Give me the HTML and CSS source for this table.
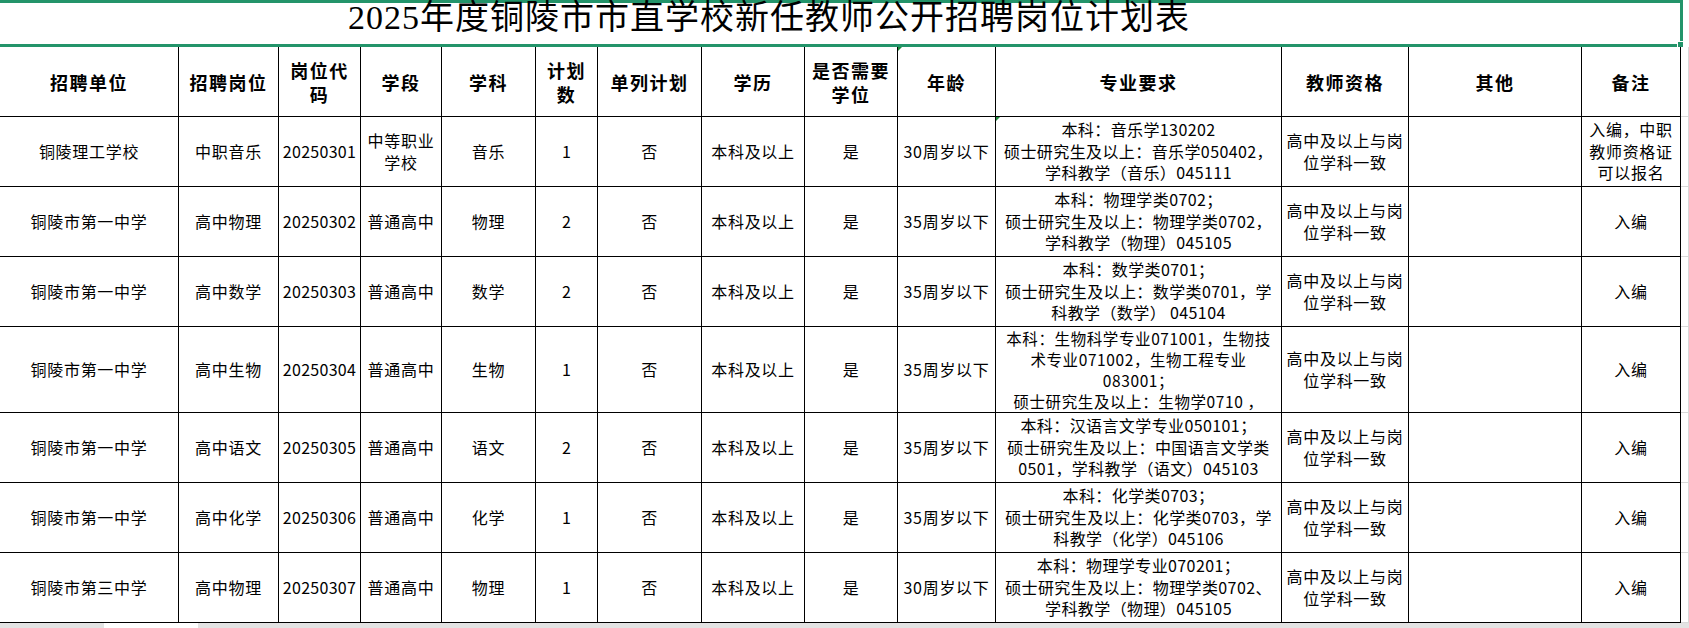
FILE: index.html
```html
<!DOCTYPE html>
<html lang="zh-CN">
<head>
<meta charset="utf-8">
<title>2025年度铜陵市市直学校新任教师公开招聘岗位计划表</title>
<link rel="stylesheet" href="styles.css">
</head>
<body>
<div class="sheet">
  <div class="title-row">
    <div class="title">2025年度铜陵市市直学校新任教师公开招聘岗位计划表<span class="handle"></span></div>
  </div>
  <div class="grid">
    <div class="cell head">招聘单位</div>
    <div class="cell head">招聘岗位</div>
    <div class="cell head">岗位代<br>码</div>
    <div class="cell head">学段</div>
    <div class="cell head">学科</div>
    <div class="cell head">计划<br>数</div>
    <div class="cell head">单列计划</div>
    <div class="cell head">学历</div>
    <div class="cell head">是否需要<br>学位</div>
    <div class="cell head"><span class="flag"></span>年龄</div>
    <div class="cell head">专业要求</div>
    <div class="cell head">教师资格</div>
    <div class="cell head">其他</div>
    <div class="cell head">备注</div>
    <div class="pad"></div>

    <div class="cell">铜陵理工学校</div>
    <div class="cell">中职音乐</div>
    <div class="cell num">20250301</div>
    <div class="cell">中等职业<br>学校</div>
    <div class="cell">音乐</div>
    <div class="cell num">1</div>
    <div class="cell">否</div>
    <div class="cell">本科及以上</div>
    <div class="cell">是</div>
    <div class="cell">30周岁以下</div>
    <div class="cell major"><span class="flag"></span>本科：音乐学130202<br>硕士研究生及以上：音乐学050402，<br>学科教学（音乐）045111</div>
    <div class="cell">高中及以上与岗<br>位学科一致</div>
    <div class="cell"></div>
    <div class="cell">入编，中职<br>教师资格证<br>可以报名</div>
    <div class="pad"></div>

    <div class="cell">铜陵市第一中学</div>
    <div class="cell">高中物理</div>
    <div class="cell num">20250302</div>
    <div class="cell">普通高中</div>
    <div class="cell">物理</div>
    <div class="cell num">2</div>
    <div class="cell">否</div>
    <div class="cell">本科及以上</div>
    <div class="cell">是</div>
    <div class="cell">35周岁以下</div>
    <div class="cell major">本科：物理学类0702；<br>硕士研究生及以上：物理学类0702，<br>学科教学（物理）045105</div>
    <div class="cell">高中及以上与岗<br>位学科一致</div>
    <div class="cell"></div>
    <div class="cell">入编</div>
    <div class="pad"></div>

    <div class="cell">铜陵市第一中学</div>
    <div class="cell">高中数学</div>
    <div class="cell num">20250303</div>
    <div class="cell">普通高中</div>
    <div class="cell">数学</div>
    <div class="cell num">2</div>
    <div class="cell">否</div>
    <div class="cell">本科及以上</div>
    <div class="cell">是</div>
    <div class="cell">35周岁以下</div>
    <div class="cell major">本科：数学类0701；<br>硕士研究生及以上：数学类0701，学<br>科教学（数学） 045104</div>
    <div class="cell">高中及以上与岗<br>位学科一致</div>
    <div class="cell"></div>
    <div class="cell">入编</div>
    <div class="pad"></div>

    <div class="cell">铜陵市第一中学</div>
    <div class="cell">高中生物</div>
    <div class="cell num">20250304</div>
    <div class="cell">普通高中</div>
    <div class="cell">生物</div>
    <div class="cell num">1</div>
    <div class="cell">否</div>
    <div class="cell">本科及以上</div>
    <div class="cell">是</div>
    <div class="cell">35周岁以下</div>
    <div class="cell major tight">本科：生物科学专业071001，生物技<br>术专业071002，生物工程专业<br>083001；<br>硕士研究生及以上：生物学0710 ，</div>
    <div class="cell">高中及以上与岗<br>位学科一致</div>
    <div class="cell"></div>
    <div class="cell">入编</div>
    <div class="pad"></div>

    <div class="cell">铜陵市第一中学</div>
    <div class="cell">高中语文</div>
    <div class="cell num">20250305</div>
    <div class="cell">普通高中</div>
    <div class="cell">语文</div>
    <div class="cell num">2</div>
    <div class="cell">否</div>
    <div class="cell">本科及以上</div>
    <div class="cell">是</div>
    <div class="cell">35周岁以下</div>
    <div class="cell major">本科：汉语言文学专业050101；<br>硕士研究生及以上：中国语言文学类<br>0501，学科教学（语文）045103</div>
    <div class="cell">高中及以上与岗<br>位学科一致</div>
    <div class="cell"></div>
    <div class="cell">入编</div>
    <div class="pad"></div>

    <div class="cell">铜陵市第一中学</div>
    <div class="cell">高中化学</div>
    <div class="cell num">20250306</div>
    <div class="cell">普通高中</div>
    <div class="cell">化学</div>
    <div class="cell num">1</div>
    <div class="cell">否</div>
    <div class="cell">本科及以上</div>
    <div class="cell">是</div>
    <div class="cell">35周岁以下</div>
    <div class="cell major">本科：化学类0703；<br>硕士研究生及以上：化学类0703，学<br>科教学（化学）045106</div>
    <div class="cell">高中及以上与岗<br>位学科一致</div>
    <div class="cell"></div>
    <div class="cell">入编</div>
    <div class="pad"></div>

    <div class="cell">铜陵市第三中学</div>
    <div class="cell">高中物理</div>
    <div class="cell num">20250307</div>
    <div class="cell">普通高中</div>
    <div class="cell">物理</div>
    <div class="cell num">1</div>
    <div class="cell">否</div>
    <div class="cell">本科及以上</div>
    <div class="cell">是</div>
    <div class="cell">30周岁以下</div>
    <div class="cell major">本科：物理学专业070201；<br>硕士研究生及以上：物理学类0702、<br>学科教学（物理）045105</div>
    <div class="cell">高中及以上与岗<br>位学科一致</div>
    <div class="cell"></div>
    <div class="cell">入编</div>
    <div class="pad"></div>
  </div>
  <div class="hscroll">
    <div class="bar bar-a"></div>
    <div class="gap"></div>
    <div class="bar bar-b"></div>
  </div>
</div>
</body>
</html>
```
FILE: styles.css
```css
html, body {
  margin: 0;
  padding: 0;
  background: #ffffff;
  overflow: hidden;
}

.sheet {
  position: relative;
  width: 1689px;
  height: 628px;
  overflow: hidden;
  color: #000000;
  font-family: "Noto Sans CJK SC", "Liberation Sans", sans-serif;
}

.title-row {
  display: flex;
  height: 47px;
}

.title {
  position: relative;
  box-sizing: border-box;
  width: 1683px;
  height: 47px;
  border: 3px solid #23946a;
  border-left: none;
  padding-left: 348px;
  font-family: "Liberation Serif", "Noto Sans CJK SC", serif;
  font-size: 34px;
  letter-spacing: 1px;
  line-height: 30px;
  white-space: nowrap;
}

.handle {
  position: absolute;
  right: -4px;
  bottom: -4px;
  width: 5px;
  height: 5px;
  background: #23946a;
  border: 1px solid #ffffff;
}

.grid {
  display: grid;
  grid-template-columns: 179px 100px 82px 81px 94px 62px 104px 103px 93px 98px 286px 127px 173px 99px 8px;
  grid-template-rows: 70px 70px 70px 70px 86px 70px 70px 70px;
}

.cell {
  position: relative;
  box-sizing: border-box;
  border-right: 1px solid #000000;
  border-bottom: 1px solid #000000;
  display: flex;
  align-items: center;
  justify-content: center;
  text-align: center;
  overflow: hidden;
  white-space: nowrap;
  font-size: 16px;
  letter-spacing: 0.7px;
  line-height: 21.5px;
}

.head {
  font-weight: 700;
  font-size: 18px;
  letter-spacing: 1.5px;
  line-height: 24px;
}

.num {
  letter-spacing: 0.3px;
}

.major {
  letter-spacing: 0.4px;
  line-height: 21.5px;
}

.tight {
  font-size: 15.5px;
  letter-spacing: 0.6px;
  line-height: 21px;
}

.pad {
  box-sizing: border-box;
  border-right: 1px solid #d9d9d9;
  border-bottom: 1px solid #d9d9d9;
}

.flag {
  position: absolute;
  left: 0;
  top: 0;
  width: 0;
  height: 0;
  border-top: 4px solid #1f8a3c;
  border-right: 4px solid transparent;
}

.hscroll {
  position: absolute;
  left: 0;
  right: 0;
  bottom: 0;
  height: 5px;
  display: flex;
  background: #ffffff;
}

.bar {
  background: #e3e3e3;
}

.bar-a {
  width: 104px;
}

.gap {
  width: 94px;
}

.bar-b {
  flex: 1;
}
```
